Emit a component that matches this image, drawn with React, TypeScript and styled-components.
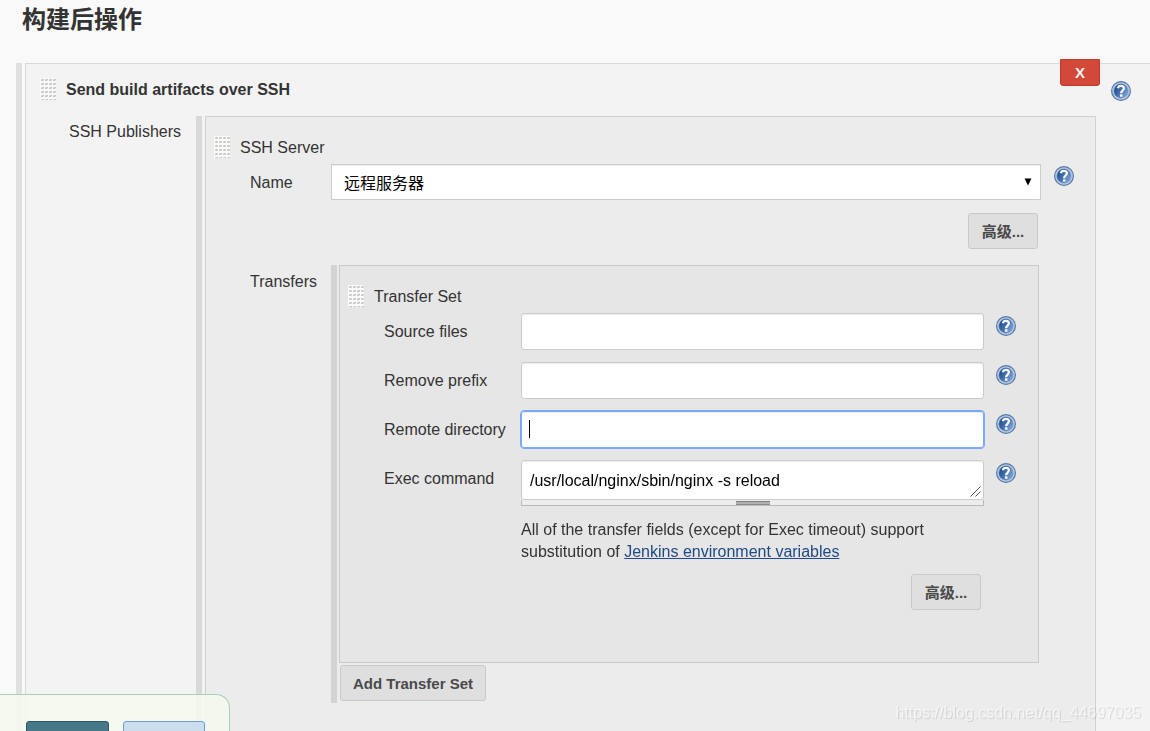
import React, { useId } from "react";
import styled, { createGlobalStyle, css } from "styled-components";

const GlobalStyle = createGlobalStyle`
  * { box-sizing: border-box; }
  body {
    margin: 0;
    background: #f9f9f9;
    color: #333;
    font: 16px/22px "Liberation Sans", "Noto Sans CJK SC", sans-serif;
  }
`;

const Page = styled.main`
  display: flex;
  flex-direction: column;
  min-height: 100vh;
`;

const Heading = styled.h1`
  margin: 0;
  padding: 4px 22px 27px;
  font-size: 24px;
  line-height: 32px;
  font-weight: 700;
`;

const Rail = styled.div<{ $color: string; $gap: number }>`
  display: flex;
  flex-direction: column;
  flex: 1;
  min-width: 0;
  border-left: 6px solid ${(p) => p.$color};
  padding-left: ${(p) => p.$gap}px;
`;

const StepRail = styled(Rail)`
  margin-left: 16px;
`;

const ServerRail = styled(Rail)`
  margin-right: 54px;
`;

const StepPanel = styled.section`
  position: relative;
  display: flex;
  flex-direction: column;
  flex: 1;
  border: solid #d9d9d9;
  border-width: 1px 0 0 1px;
  background: #f3f3f3;
`;

const ServerPanel = styled.section`
  flex: 1;
  border: solid #d0d0d0;
  border-width: 1px 1px 0;
  background: #ececec;
  padding: 19px 0 28px 8px;
`;

const TransferPanel = styled.section`
  border: 1px solid #c9c9c9;
  background: #e6e6e6;
  padding: 19px 22px 52px 8px;
`;

const TitleRow = styled.div`
  display: flex;
  align-items: flex-start;
  gap: 10px;
  height: 22px;
`;

const StepTitleRow = styled(TitleRow)`
  margin: 14px 19px 16px 14px;
`;

const Title = styled.div<{ $strong?: boolean }>`
  flex: 1;
  padding-top: 1px;
  font-weight: ${(p) => (p.$strong ? 700 : 400)};
`;

const StepBody = styled.div`
  display: flex;
  flex: 1;
`;

const StepLabel = styled.div`
  width: 170px;
  flex: none;
  padding: 5px 0 0 43px;
`;

const DeleteButton = styled.button`
  position: absolute;
  top: -5px;
  right: 50px;
  width: 40px;
  height: 27px;
  padding: 0;
  border: 1px solid #c23b2b;
  border-radius: 0 0 3px 3px;
  background: #d24939;
  color: #f2f2f2;
  font: 700 15px/24px "Liberation Sans", sans-serif;
`;

const Button = styled.button`
  height: 36px;
  padding: 1px 12px 0;
  border: 1px solid #c9c9c9;
  border-radius: 3px;
  background: #dfdfdf;
  color: #4a4a4a;
  font: 700 15px/22px "Liberation Sans", "Noto Sans CJK SC", sans-serif;
  white-space: nowrap;
`;

const AdvancedButton = styled(Button)`
  width: 70px;
`;

const AddButton = styled(Button)`
  align-self: flex-start;
  margin: 2px 0 2px 1px;
`;

const NameRow = styled.div`
  display: flex;
  margin: 6px 21px 13px 36px;
`;

const NameLabel = styled.label`
  width: 81px;
  flex: none;
  padding-top: 8px;
`;

const SelectBox = styled.div`
  position: relative;
  flex: 1;
  margin-right: 13px;
  & > svg {
    position: absolute;
    right: 9px;
    top: 14px;
    pointer-events: none;
  }
`;

const inputSurface = css`
  display: block;
  width: 100%;
  margin: 0;
  border: 1px solid #ccc;
  background: #fff;
  box-shadow: inset 0 1px 1px rgba(0, 0, 0, 0.08);
  color: #000;
  font: 16px/22px "Liberation Sans", "Noto Sans CJK SC", sans-serif;
`;

const Select = styled.select`
  ${inputSurface}
  appearance: none;
  height: 36px;
  padding: 4px 30px 0 12px;
  border-radius: 0;
`;

const ActionRow = styled.div<{ $right: number }>`
  display: flex;
  justify-content: flex-end;
  padding-right: ${(p) => p.$right}px;
`;

const TransfersRow = styled.div`
  display: flex;
  margin: 16px 56px 0 36px;
`;

const TransfersLabel = styled.div`
  width: 81px;
  flex: none;
  padding-top: 6px;
`;

const Field = styled.div`
  display: flex;
  margin: 0 0 12px 36px;
`;

const Fields = styled.div`
  padding-top: 6px;
`;

const FieldLabel = styled.label`
  width: 137px;
  flex: none;
  padding-top: 8px;
`;

const FieldControl = styled.div`
  position: relative;
  flex: 1;
  min-width: 0;
  margin-right: 12px;
`;

const TextInput = styled.input`
  ${inputSurface}
  height: 37px;
  padding: 0 8px;
  border-radius: 3px;
  caret-color: transparent;
  &:focus {
    outline: 1px solid #7aaaf7;
    border-color: #7aaaf7;
  }
`;

const Caret = styled.span`
  display: none;
  position: absolute;
  left: 8px;
  top: 9px;
  width: 1px;
  height: 18px;
  background: #000;
  pointer-events: none;
  input:focus:placeholder-shown + & {
    display: block;
  }
`;

const TextAreaBox = styled.div`
  position: relative;
  & > svg {
    position: absolute;
    right: 2px;
    bottom: 2px;
    pointer-events: none;
  }
`;

const TextArea = styled.textarea`
  ${inputSurface}
  height: 40px;
  padding: 9px 8px 7px;
  border-radius: 3px;
  resize: vertical;
  overflow: hidden;
  &::-webkit-resizer {
    background: transparent;
  }
`;

const ResizeStrip = styled.div`
  display: flex;
  justify-content: center;
  height: 6px;
  border: solid #b9b9b9;
  border-width: 0 1px 1px;
  background: #ededed;
`;

const ResizeHandle = styled.div`
  width: 34px;
  height: 4px;
  margin-top: 1px;
  border-top: 1px solid #808080;
  border-bottom: 1px solid #8c8c8c;
  background: #b0b0ae;
`;

const Note = styled.p`
  margin: 13px 0 -1px;
`;

const Link = styled.a`
  color: #204a87;
  text-decoration: underline;
`;

const HelpButton = styled.button<{ $top: number }>`
  flex: none;
  width: 20px;
  height: 20px;
  margin-top: ${(p) => p.$top}px;
  padding: 0;
  border: 0;
  background: none;
  & > svg { display: block; }
`;

const SaveBar = styled.div`
  position: fixed;
  left: 0;
  bottom: 0;
  display: flex;
  gap: 14px;
  width: 230px;
  height: 37px;
  padding: 26px 0 0 26px;
  overflow: hidden;
  border: solid #a9cfbc;
  border-width: 1px 1px 0 0;
  border-radius: 0 14px 0 0;
  background: rgba(245, 249, 239, 0.85);
`;

const BarButton = styled.button<{ $primary?: boolean }>`
  flex: none;
  width: ${(p) => (p.$primary ? 83 : 82)}px;
  height: 32px;
  border: 1px solid ${(p) => (p.$primary ? "#2f5568" : "#6f9fd0")};
  border-radius: 3px;
  background: ${(p) => (p.$primary ? "#467887" : "#ccdded")};
`;

const Watermark = styled.div`
  position: fixed;
  right: 9px;
  bottom: 7px;
  color: rgba(255, 255, 255, 0.6);
  text-shadow: 1px 1px 1px rgba(0, 0, 0, 0.12);
  pointer-events: none;
`;

function Help({ top, label }: { top: number; label: string }) {
  const id = useId();
  return (
    <HelpButton type="button" $top={top} aria-label={label}>
      <svg width="20" height="20" viewBox="0 0 20 20">
        <defs>
          <linearGradient id={id} x1="0" y1="0.2" x2="1" y2="0.8">
            <stop offset="0" stopColor="#204a87" />
            <stop offset="0.4" stopColor="#3d69a8" />
            <stop offset="1" stopColor="#86a9d6" />
          </linearGradient>
        </defs>
        <circle cx="10" cy="10" r="9.4" fill="#bccde3" stroke="#5577a8" strokeWidth="1.2" />
        <circle cx="10" cy="10" r="7.2" fill={`url(#${id})`} stroke="#6d8fbf" strokeWidth="0.5" />
        <path d="M6.9 7.3C7.2 5.5 8.4 4.9 9.9 4.9c1.8 0 3 .9 3 2.4 0 2.3-2.8 2.2-2.8 5" fill="none" stroke="#f4f7fb" strokeWidth="2.3" />
        <rect x="8.9" y="13.2" width="2.6" height="2.6" rx="0.6" fill="#f4f7fb" />
      </svg>
    </HelpButton>
  );
}

function Grip() {
  const id = useId();
  return (
    <svg width="16" height="22" viewBox="0 0 16 22" aria-hidden="true">
      <defs>
        <pattern id={id} width="4" height="4" patternUnits="userSpaceOnUse">
          <rect width="4" height="4" fill="#fafafa" />
          <path d="M1 1h3v2h-3z" fill="#dededb" />
          <path d="M2 1h2v1h-2z" fill="#c9c9c6" />
          <path d="M1 2h2v1h-2z" fill="#c9c9c6" />
        </pattern>
      </defs>
      <rect width="16" height="22" fill={`url(#${id})`} />
    </svg>
  );
}

const textFields = [
  { id: "source", label: "Source files" },
  { id: "prefix", label: "Remove prefix" },
  { id: "directory", label: "Remote directory", focused: true },
];

export default function App() {
  return (
    <>
      <GlobalStyle />
      <Page>
        <Heading>构建后操作</Heading>
        <StepRail $color="#e0e0e0" $gap={3}>
          <StepPanel>
            <DeleteButton type="button">X</DeleteButton>
            <StepTitleRow>
              <Grip />
              <Title $strong>Send build artifacts over SSH</Title>
              <Help top={3} label="Help" />
            </StepTitleRow>
            <StepBody>
              <StepLabel>SSH Publishers</StepLabel>
              <ServerRail $color="#d9d9d9" $gap={3}>
                <ServerPanel>
                  <TitleRow>
                    <Grip />
                    <Title>SSH Server</Title>
                  </TitleRow>
                  <NameRow>
                    <NameLabel htmlFor="server">Name</NameLabel>
                    <SelectBox>
                      <Select id="server">
                        <option>远程服务器</option>
                      </Select>
                      <svg width="8" height="8" viewBox="0 0 8 8" aria-hidden="true">
                        <path d="M0.5 0.5h7L4 7.5z" fill="#000" />
                      </svg>
                    </SelectBox>
                    <Help top={2} label="Help: Name" />
                  </NameRow>
                  <ActionRow $right={57}>
                    <AdvancedButton type="button">高级...</AdvancedButton>
                  </ActionRow>
                  <TransfersRow>
                    <TransfersLabel>Transfers</TransfersLabel>
                    <Rail $color="#d3d3d3" $gap={2}>
                      <TransferPanel>
                        <TitleRow>
                          <Grip />
                          <Title>Transfer Set</Title>
                        </TitleRow>
                        <Fields>
                          {textFields.map((f) => (
                            <Field key={f.id}>
                              <FieldLabel htmlFor={f.id}>{f.label}</FieldLabel>
                              <FieldControl>
                                <TextInput id={f.id} type="text" placeholder=" " autoFocus={f.focused} />
                                <Caret />
                              </FieldControl>
                              <Help top={3} label={`Help: ${f.label}`} />
                            </Field>
                          ))}
                          <Field>
                            <FieldLabel htmlFor="exec">Exec command</FieldLabel>
                            <FieldControl>
                              <TextAreaBox>
                                <TextArea id="exec" rows={1} defaultValue="/usr/local/nginx/sbin/nginx -s reload" />
                                <svg width="12" height="12" viewBox="0 0 12 12" aria-hidden="true">
                                  <rect width="12" height="12" fill="#fff" />
                                  <path d="M0.5 10.5l10-10M5.5 10.5l5-5" stroke="#555" strokeWidth="1" />
                                </svg>
                              </TextAreaBox>
                              <ResizeStrip>
                                <ResizeHandle />
                              </ResizeStrip>
                              <Note>
                                All of the transfer fields (except for Exec timeout) support substitution of{" "}
                                <Link href="#variables">Jenkins environment variables</Link>
                              </Note>
                            </FieldControl>
                            <Help top={3} label="Help: Exec command" />
                          </Field>
                        </Fields>
                        <ActionRow $right={35}>
                          <AdvancedButton type="button">高级...</AdvancedButton>
                        </ActionRow>
                      </TransferPanel>
                      <AddButton type="button">Add Transfer Set</AddButton>
                    </Rail>
                  </TransfersRow>
                </ServerPanel>
              </ServerRail>
            </StepBody>
          </StepPanel>
        </StepRail>
      </Page>
      <SaveBar>
        <BarButton type="button" $primary aria-label="Save" />
        <BarButton type="button" aria-label="Apply" />
      </SaveBar>
      <Watermark>https://blog.csdn.net/qq_44697035</Watermark>
    </>
  );
}
